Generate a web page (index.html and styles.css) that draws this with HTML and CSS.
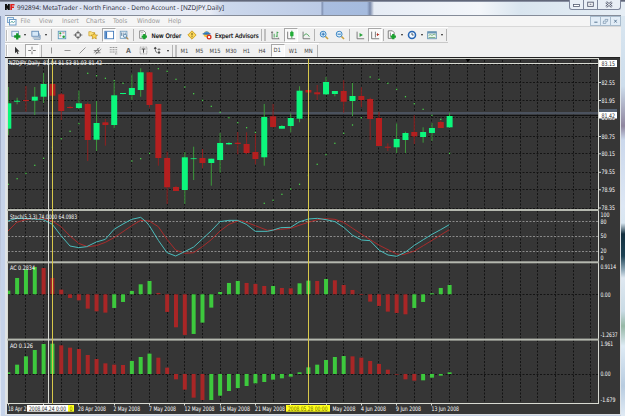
FILE: index.html
```html
<!DOCTYPE html>
<html lang="en">
<head>
<meta charset="utf-8">
<title>MetaTrader</title>
<link rel="stylesheet" href="styles.css">
</head>
<body>
<div class="window">
  <header class="title">
    <svg class="logo" width="10" height="8" viewBox="0 0 10 8"><path d="M0 1h1.8l1.2 2V1h1.8v6H3L1.8 5v2H0z" fill="#111"/><path d="M5.3 1h4.2v1.6H7v1h2v1.4H7v2H5.3z" fill="#e0201c"/></svg>
    <svg class="caption" width="240" height="14"><text x="2" y="10" textLength="207" lengthAdjust="spacingAndGlyphs">992894: MetaTrader - North Finance - Demo Account - [NZDJPY,Daily]</text></svg>
    <div class="winbtns">
      <svg width="13" height="9" viewBox="0 0 13 9"><rect x="3.5" y="4.5" width="6" height="2" fill="#fff" stroke="#555b70" stroke-width=".8"/></svg>
      <svg width="14" height="9" viewBox="0 0 14 9"><rect x="4" y="2" width="6" height="4.5" fill="#fff" stroke="#555b70"/><rect x="6" y="3.7" width="2" height="1" fill="#555b70"/></svg>
      <svg width="23" height="9" viewBox="0 0 23 9"><path d="M8.500 2l6 5M14.500 2l-6 5" stroke="#555b70" stroke-width="2.4"/><path d="M8.700 2.200l5.600 4.600M14.300 2.200l-5.600 4.600" stroke="#fff" stroke-width="1"/></svg>
    </div>
  </header>
  <div class="panel">
    <nav class="menu">
      <svg width="10" height="9" viewBox="0 0 10 9"><rect x=".5" y=".5" width="6" height="5" fill="#e4f1fb" stroke="#7fa6cc"/><rect x="2.500" y="2.500" width="6.500" height="5.500" fill="#fff" stroke="#6c9ac6"/><path d="M3.500 6l1.500-2 1.300 2 1.700-2" fill="none" stroke="#57a5a0" stroke-width=".8"/></svg>
      <span>File</span><span>View</span><span>Insert</span><span>Charts</span><span>Tools</span><span>Window</span><span>Help</span>
      <div class="mdi">
        <svg viewBox="0 0 11 10"><path d="M4 6.500h4" stroke="#51708c" stroke-width="1.200"/></svg>
        <svg viewBox="0 0 11 10"><path d="M3 5h3.500l-.7 3H2.500zM5 4V3h3.500l-.8 3" fill="none" stroke="#6f8ba4" stroke-width=".8"/></svg>
        <svg viewBox="0 0 11 10"><path d="M4 3.500l3 3.500M7 3.500L4 7" stroke="#51708c" stroke-width="1.100"/></svg>
      </div>
    </nav>
    <div class="bar main">
      <i class="grip"></i>
      <svg viewBox="0 0 12 12"><rect x="1" y="1.500" width="8" height="6" fill="#e6f1fb" stroke="#6c91b8"/><path d="M7.500 4v7.500M3.800 7.800h7.500" stroke="#16962a" stroke-width="2.800"/></svg>
      <b class="caret"></b>
      <svg viewBox="0 0 12 12"><rect x="1" y="1.500" width="8" height="6" fill="#d5e8f8" stroke="#5c86b2"/><path d="M2 9.500h8V4M3.500 11.200H11V6" fill="none" stroke="#7799b8"/></svg>
      <b class="caret"></b>
      <i class="sep"></i>
      <svg viewBox="0 0 12 12"><rect x="1.500" y="1.500" width="9" height="9" fill="#eef7f9" stroke="#5895b5"/><circle cx="4" cy="4" r="1.300" fill="#28a138"/><circle cx="8" cy="8" r="1.500" fill="#28a138"/><path d="M6.500 3.500h2.500M3 7h2" stroke="#c55"/></svg>
      <svg viewBox="0 0 12 12"><circle cx="6" cy="6" r="3.200" fill="none" stroke="#555"/><path d="M6 .8v4M6 7.200v4M.8 6h4M7.200 6h4" stroke="#555"/></svg>
      <svg viewBox="0 0 12 12"><path d="M1 2h3l1 1h3v4H1z" fill="#fbe27b" stroke="#c79a2a" stroke-width=".8"/><path d="M7.500 3.500l1.200 2.400 2.700.3-2 1.800.6 2.700-2.500-1.300L5 10.700l.6-2.700-2-1.800 2.700-.3z" fill="#fcd44e" stroke="#b88a1e" stroke-width=".8"/></svg>
      <svg class="on" viewBox="0 0 12 12"><rect x="1" y="1.500" width="10.500" height="9" fill="#fff" stroke="#3a74b8"/><rect x="1.500" y="2" width="2.200" height="8" fill="#3b77bd"/></svg>
      <svg viewBox="0 0 12 12"><rect x="1.500" y="1.500" width="8" height="8.500" fill="#eaf4fb" stroke="#6f9cbd"/><path d="M3 3v4M5 3v4M7.500 3v3" stroke="#6a86a0"/><circle cx="7.200" cy="7" r="2" fill="#d9ecf8" stroke="#5a83a6"/><path d="M8.700 8.500l2.500 2.800" stroke="#b5894a" stroke-width="1.300"/></svg>
      <i class="sep"></i>
      <svg viewBox="0 0 12 12"><path d="M2 1h5l2 2v7H2z" fill="#fff" stroke="#777"/><path d="M3.500 3h3M3.500 5h3" stroke="#999" stroke-width=".7"/><path d="M7.500 4.800v6.400M4.300 8h6.400" stroke="#18a12c" stroke-width="2.700"/></svg>
      <span class="lbl order">New Order</span>
      <svg viewBox="0 0 12 12"><path d="M6 1l5 5-5 5-5-5z" fill="#fbd95a" stroke="#c8961a"/><path d="M6 3.500v3M6 7.500v1.200" stroke="#6e5310" stroke-width="1.200"/></svg>
      <svg viewBox="0 0 12 12"><circle cx="5.500" cy="5" r="3.600" fill="#f5c63c"/><path d="M1.500 4.500Q5.500-1.500 10 4.500z" fill="#468fd0"/><ellipse cx="5.500" cy="4.600" rx="5" ry="1.100" fill="#2f72b8"/><circle cx="8.500" cy="8.500" r="3" fill="#d8321f"/><rect x="7.300" y="7.300" width="2.400" height="2.400" fill="#fff"/></svg>
      <span class="lbl ea">Expert Advisors</span>
      <i class="sep dbl"></i>
      <svg viewBox="0 0 12 12"><path d="M2.500 2v8.500H11M1.500 3.500l1-1.500 1 1.500M9.800 9.500l1.200 1" fill="none" stroke="#666"/><path d="M5 4.500v4.500M8.500 2v6.500M8.500 3H10M7 7.500h1.500" stroke="#2b9b3c"/></svg>
      <svg class="on" viewBox="0 0 12 12"><path d="M2 2v8.500H11" fill="none" stroke="#666"/><path d="M7 .8v9" stroke="#1d8a2c"/><rect x="5" y="2" width="4" height="5.500" rx="1" fill="#23ad38"/></svg>
      <svg viewBox="0 0 12 12"><path d="M2.500 2v8.500H11" fill="none" stroke="#666"/><path d="M3 7.500q3-6 7 .5" fill="none" stroke="#3b9d4c"/></svg>
      <i class="sep"></i>
      <svg viewBox="0 0 12 12"><path d="M7.500 7.500l3.300 3.300" stroke="#c9a03c" stroke-width="1.900"/><circle cx="5" cy="5" r="3.500" fill="#dff1fc" stroke="#3f88c5" stroke-width="1.200"/><path d="M5 3v4M3 5h4" stroke="#2f74b5" stroke-width="1.200"/></svg>
      <svg viewBox="0 0 12 12"><path d="M7.500 7.500l3.300 3.300" stroke="#c9a03c" stroke-width="1.900"/><circle cx="5" cy="5" r="3.500" fill="#dff1fc" stroke="#3f88c5" stroke-width="1.200"/><path d="M3 5h4" stroke="#2f74b5" stroke-width="1.200"/></svg>
      <i class="sep"></i>
      <svg viewBox="0 0 12 12"><path d="M2.500 2v8.500H11" fill="none" stroke="#666"/><path d="M5.500 3.500v5l4-2.500z" fill="#2ba33c"/></svg>
      <svg class="on" viewBox="0 0 12 12"><path d="M2 2v8.500H11M6.500 2v7" fill="none" stroke="#666"/><path d="M11 5.500H8M9 4v3" stroke="#b5382c" stroke-width="1.200"/></svg>
      <i class="sep"></i>
      <svg viewBox="0 0 12 12"><path d="M1.500 1h5l2 2v7h-7z" fill="#fff" stroke="#666"/><path d="M4 3v5" stroke="#777"/><path d="M7.500 4.800v6.400M4.300 8h6.400" stroke="#18a12c" stroke-width="2.700"/></svg>
      <b class="caret"></b>
      <svg viewBox="0 0 12 12"><circle cx="6" cy="6" r="4.200" fill="#f4faff" stroke="#2765b3" stroke-width="1.900"/><path d="M6 3.500V6h2" fill="none" stroke="#345"/></svg>
      <b class="caret"></b>
      <svg viewBox="0 0 12 12"><rect x=".8" y="2" width="10.400" height="8.500" fill="#e9f4ec" stroke="#5d8db0"/><path d="M1 3.300h10" stroke="#5d8db0" stroke-width="1.600"/><path d="M2 6.500l2-1 2 1 2.500-1.500 2 1M2 9h8" fill="none" stroke="#5ea06c" stroke-width=".9"/></svg>
      <b class="caret"></b>
      <i class="sep"></i>
    </div>
    <div class="bar draw">
      <i class="grip"></i>
      <svg viewBox="0 0 12 12"><path d="M4 1v8.500l2-1.800 1.500 3.300 1.300-.6-1.500-3.200h2.700z" fill="#333"/></svg>
      <svg class="on" viewBox="0 0 12 12"><path d="M6 1v3.800M6 7.200V11M1 6h3.800M7.200 6H11" stroke="#555"/></svg>
      <i class="sep"></i>
      <svg viewBox="0 0 12 12"><path d="M6 2v8" stroke="#777"/></svg>
      <svg viewBox="0 0 12 12"><path d="M2 6h8" stroke="#777"/></svg>
      <svg viewBox="0 0 12 12"><path d="M2 10l8-8" stroke="#777"/></svg>
      <svg viewBox="0 0 12 12"><path d="M1 9l8-7M3 11l8-7M3 6l2 4M6 3l2 5M1 6h7M4 9h6" stroke="#666" stroke-width=".9"/></svg>
      <svg viewBox="0 0 12 12"><path d="M1 2h10M1 5h10M1 8h10M8 10.500h3" stroke="#777" stroke-dasharray="1.500 .6"/></svg>
      <span class="tool">A</span>
      <svg viewBox="0 0 12 12"><rect x="1.500" y="1.500" width="9" height="9" fill="none" stroke="#888" stroke-dasharray="1.200 .8"/><path d="M3.500 4h5M6 4v5" stroke="#444" stroke-width="1.300"/></svg>
      <svg viewBox="0 0 12 12"><path d="M1 3l2-2 2 2-2 2zM6 8.500l2-2 2 2-2 2z" fill="#444"/><path d="M3 5l1 3 2 1M6 4.500h4M8 3v3" fill="none" stroke="#555"/></svg>
      <b class="caret"></b>
      <i class="sep dbl"></i>
      <span>M1</span><span>M5</span><span>M15</span><span>M30</span><span>H1</span><span>H4</span><span class="on">D1</span><span>W1</span><span>MN</span>
      <i class="sep"></i>
    </div>
    <svg id="chart" viewBox="5 57 616 358" width="616" height="358"></svg>
  </div>
</div>
<script src="chart.js"></script>
</body>
</html>
```
FILE: styles.css
```css
* { box-sizing: border-box; }
html, body { margin: 0; height: 100%; overflow: hidden; }
body { font-family: "DejaVu Sans Condensed", "DejaVu Sans", sans-serif; font-size: 6px; color: #222; }

.window {
  width: 625px;
  height: 416px;
  padding: 0 4px 0 5px;
  background:
    linear-gradient(#4d5265, #9ba3b5) 0 0 / 100% 2px no-repeat,
    linear-gradient(90deg, #ccd6ea 0, #e1e7f3 110px, #e8ecf5 210px, #ccd8ec 225px, #bccbe6 321px, #7d8dad 322px, #a9bddf 324px, #a5bbde 367px, #7888a9 370px, #e6ecf5 374px, #f3f6fa 480px, #d9e5ef 520px, #e6eef5 625px) 0 0 / 100% 16px no-repeat,
    linear-gradient(#8593b4, #e6edf8) 0 16px / 1px 400px no-repeat,
    linear-gradient(#d9e6f0 0, #cdddec 70px, #8f869f 110px, #cbd8ec 124px, #dde7f4 190px, #d8e6f1 207px, #14303f 218px, #1d4254 240px, #90a9b8 254px, #dfe8f1 262px, #c9dbe5 295px, #96b8a6 310px, #deebf5 330px, #b8cce0 370px, #e1ebf5 400px) 621px 16px / 4px 400px no-repeat,
    #c6d3e9;
}

.title { height: 15px; display: flex; align-items: flex-start; }
.logo { margin: 3px 0 0 0; }
.caption { flex: none; font: 6.500px "Open Sans", sans-serif; text-rendering: geometricPrecision; }
.caption text { fill: #1d2433; }
.winbtns { display: flex; margin-left: auto; margin-right: 0; height: 10px; background: #e9eef5; border: 1px solid #7e869b; border-top: 0; border-radius: 0 0 3px 3px; }
.winbtns svg + svg { border-left: 1px solid #7e869b; }
.winbtns svg { flex: none; display: block; }

.panel { width: 616px; background: #f0f0f0; border-top: 1px solid #858c99; display: flex; flex-direction: column; }

.menu { height: 11px; display: grid; grid-template-columns: 14.500px 18.500px 23px 24px 27px 24px 31px 20px 1fr; align-items: center; background: #f5f5f5; border-bottom: 1px solid #d8d8d8; font-size: 6.500px; color: #9a9a9a; padding-left: 1px; white-space: nowrap; }
.menu > svg { margin-left: 1px; }
.mdi { display: flex; justify-content: flex-end; }
.mdi svg { width: 10px; height: 10px; background: #e2edf7; border: 1px solid #a9bccd; border-left-width: 0; }
.mdi svg:first-child { width: 11px; border-left-width: 1px; }

.bar { display: grid; align-items: center; justify-items: center; border-top: 1px solid #fff; border-bottom: 1px solid #c8c8c8; width: max-content; white-space: nowrap; }
.bar svg { width: 10px; height: 10px; display: block; }
.bar .on { background: #f9f9f9; border: 1px solid #a8a8a8; border-right-color: #fff; border-bottom-color: #fff; width: 14px; height: 14px; padding: 1px; }
.main { height: 16px; grid-template-columns: 4px 13px 6px 15px 6px 5px 16px 15px 16px 15px 15px 5px 14px 34px 16px 14px 45px 8px 16px 15px 15px 3px 16px 15px 5px 15px 15px 3px 14px 5px 15px 6px 14px 6px 3px; }
.draw { height: 14px; border-bottom: 0; grid-template-columns: 4px 15px 15px 5px 15px 16px 15px 15px 16px 15px 15px 13px 7px 6px 15px 15px 16px 16px 15px 16px 15px 16px 15px 3px; font-size: 5.800px; color: #444; }
.draw svg { width: 9px; height: 9px; }
.draw .on { width: 14px; height: 13px; }
.draw span.on { line-height: 10px; padding: 0 2px; }
.lbl { justify-self: start; font-size: 6.200px; color: #000; -webkit-text-stroke: .15px #000; }
.order { margin-left: 1.500px; }
.ea { margin-left: 1px; }
.tool { font-weight: bold; font-size: 7px; color: #666; }
.caret { border: 1.800px solid transparent; border-top: 2px solid #222; border-bottom: 0; }
.sep { width: 1px; height: 12px; background: #b4b4b4; }
.dbl { width: 5px; background: none; border-left: 1px solid #b4b4b4; border-right: 2px solid #c0c0c0; }
.grip { width: 2px; height: 11px; border-left: 1px solid #bbb; border-right: 1px solid #fff; }

#chart { display: block; flex: none; font-family: "DejaVu Sans Condensed", "DejaVu Sans", sans-serif; font-size: 6.200px; }
#chart text { fill: #fff; }
#chart text.dark { fill: #222; }
#chart text.olive { fill: #6b6500; }
.bg { fill: #363636; }
.grid { stroke: #141414; stroke-width: 1; stroke-dasharray: 2 1.500; fill: none; }
.level { stroke: #a0a0a0; stroke-width: .8; stroke-dasharray: 2 1.500; }
.up { fill: #0cf77c; }
.down { fill: #b51f1f; }
.upwick { stroke: #3c9a3c; }
.downwick { stroke: #8f2020; }
.rise { fill: #3dc93d; }
.fall { fill: #a82626; }
.dot { fill: #4be04b; }
.k { fill: none; stroke: #4bbcbc; stroke-width: 1; }
.d { fill: none; stroke: #b52a2a; stroke-width: .9; }
.frame { fill: #d8dad2; }
.split { fill: #b5b8af; }
.yellow { fill: #d8c84a; }
```
FILE: chart.js
```js
const svg = document.getElementById('chart');
const parts = [];
const STEP = 8.826, X0 = 8.3;
const cx = k => X0 + STEP * k;
const rect = (x, y, w, h, cls, extra = '') =>
  parts.push(`<rect x="${x}" y="${y}" width="${w}" height="${h}" class="${cls}" ${extra}/>`);
const line = (x1, y1, x2, y2, cls) =>
  parts.push(`<line x1="${x1}" y1="${y1}" x2="${x2}" y2="${y2}" class="${cls}"/>`);
const text = (x, y, w, s, cls = '') =>
  parts.push(`<text x="${x}" y="${y}" textLength="${w}" lengthAdjust="spacingAndGlyphs" class="${cls}">${s}</text>`);

// Candles: wick top, body top, body bottom, wick bottom, direction
const candles = [
  [87,103.3,128.7,135,1],[97.7,100.7,101.7,104.3,1],[86,100,101,111.7,0],[87,96.7,100.7,115,1],[73,84,96.7,103,1],
  [84,84,95.7,97,0],[93,94.3,111,120,0],[105.7,107,108,108.7,0],[90.7,103.3,108,109.3,1],[102.5,104,140,161,0],
  [101,123,139.7,151,1],[119,122.3,125,145.7,0],[82.3,95.3,125,128.3,1],[93,93,94,94.3,1],[74.3,88,95,100,1],
  [68.3,72.3,90,96.7,1],[71.7,72.3,105,107.7,0],[104,104,158,165.7,0],[151.7,158,187.3,204,0],[185.7,187,191,191,0],
  [152,157.3,190,204,1],[146.7,158.3,159.1,180,1],[149,158,163,168.3,0],[158.7,158.7,163,185.7,1],[133,143,160,172.7,1],
  [142,143,144.3,145,1],[132,142.7,144,154.3,0],[132.3,144,153,154.3,0],[133.7,152,159,164.3,0],[104,117,157.3,165.7,1],
  [104,116.3,127,127.7,0],[125,126,128.7,128.7,1],[113.3,118,126,132.3,1],[86.3,90.7,118.7,122.3,1],[88,90,92.5,93,0],
  [85,92.3,94.3,100,0],[77,82,94.3,95,1],[91,91,94,96.3,1],[80.3,91,101.7,112.7,0],[83,96,101,116,1],
  [87.3,96,100,107.3,0],[97.7,99,119,140,0],[112,118,146,146,0],[143.3,146.7,147.7,151,0],[123.3,139,147.3,153,1],
  [131.7,133,140,153,1],[115.3,132,136.3,144,0],[127.3,132,137,142.7,1],[123,128,133,141,1],[120.3,122,128,128,0],
  [112.7,116,127.3,128,1]
];
const sar = [184.3,178.7,173.3,165.3,158.3,147.3,138.7,131.3,123.7,73.3,75.7,78.3,80.7,83.3,161,158.7,153.3,68.7,71.3,79.3,87,93.7,100.3,106.3,112.3,117.7,122.7,127.7,132.3,203.3,200.3,194.3,189,184.3,175.3,164.3,154.7,143.3,133.3,125,117.7,77,79.3,83.3,89.3,96.7,103.7,109.3,115.3,119.3,153.3];

// Histograms: height above zero in thirds of a pixel
const ac = [11,49,75,82,79,49,14,-11,-18,-43,-51,-55,-41,-23,10,30,40,4,-53,-99,-122,-119,-85,-40,7,34,40,34,31,25,25,19,18,33,41,40,46,42,28,13,-2,-22,-35,-52,-56,-60,-41,-23,3,19,28];
const ao = [5,28,53,72,90,91,86,79,75,57,45,32,28,27,39,51,61,49,19,-16,-47,-71,-78,-78,-65,-51,-42,-36,-28,-24,-17,-13,-8,5,20,28,42,51,54,53,49,39,30,13,-2,-16,-20,-19,-11,-5,5];

const main = [[24,48],[50,40],[77,40],[104,42],[130,44],[157,58],[183,92],[210,123],[236,128],[260,125],[289,111],[316,103],[342,73],[369,57],[395,43],[422,37],[438,50],[448,62],[475,106],[501,143],[527,153],[554,140],[581,126],[607,102],[634,77],[660,50],[687,46],[712,46],[739,58],[766,79],[802,79],[820,75],[842,68],[872,67],[897,51],[925,42],[952,40],[978,44],[1005,50],[1031,67],[1058,91],[1085,105],[1110,107],[1138,136],[1164,150],[1190,154],[1217,141],[1243,121],[1270,104],[1296,88],[1322,74],[1348,59]];
const signal = [[24,78],[50,52],[77,44],[104,40],[130,42],[157,48],[183,65],[210,93],[236,115],[262,125],[289,122],[316,112],[342,98],[369,80],[395,62],[422,46],[448,48],[475,65],[501,103],[527,135],[554,145],[581,143],[607,125],[634,104],[660,78],[687,58],[713,48],[725,47],[766,62],[802,76],[842,73],[872,70],[897,61],[925,52],[952,44],[978,41],[1005,43],[1031,52],[1058,70],[1085,88],[1110,104],[1138,121],[1164,134],[1190,147],[1210,149],[1243,138],[1270,122],[1296,106],[1322,90],[1348,74]];

rect(5, 57, 616, 358, 'edge', 'fill="#dfe3e6"');
rect(7, 57, 613, 357, 'bg');
rect(5, 57, 615, 1, '', 'fill="#222"');

// Grid
for (let k = 2; k <= 66; k += 2) {
  const x = Math.floor(cx(k)) + .5;
  line(x, 60, x, 403, 'grid');
}
[64.500,82.500,100.500,117.500,136.500,153.500,172.500,189.500,208.500,294.500,374.500].forEach(y => line(8, y, 598, y, 'grid'));
[221.500,236.500,251.500].forEach(y => line(8, y, 598, y, 'level'));

// Bid and ask lines
rect(8, 112, 591, 2.300, '', 'fill="#4b525e"');
rect(8, 115, 591, 1, '', 'fill="#111"');

candles.forEach(([wt, bt, bb, wb, up], k) => {
  const x = cx(k), left = Math.max(8, x - 3);
  line(x, wt, x, wb, up ? 'upwick' : 'downwick');
  rect(left, bt, x + 3 - left, bb - bt, up ? 'up' : 'down');
});
sar.forEach((y, k) => rect(cx(k) - .6, y - .6, 1.200, 1.200, 'dot'));

const histogram = (values, zero) => values.forEach((v, k) => {
  const rising = k === 0 || v >= values[k - 1];
  const x = cx(k), left = Math.max(8, x - 2), h = Math.abs(v) / 3;
  rect(left, v > 0 ? zero - h : zero, x + 2 - left, h, rising ? 'rise' : 'fall');
});
histogram(ac, 294.3);
histogram(ao, 374);

const poly = (pts, cls) =>
  parts.push(`<polyline class="${cls}" points="${pts.map(([x, y]) => `${x / 3},${205 + y / 3}`).join(' ')}"/>`);
poly(signal, 'd');
poly(main, 'k');

// Frames and pane dividers
rect(7, 58, 592, 1, 'frame');
rect(8, 63, 591, 1, 'frame');
rect(7, 58, 1, 346, 'frame');
rect(598, 58, 1, 346, 'frame');
rect(7, 403, 592, 1, 'frame');
rect(7, 209, 592, 2, 'split');
rect(7, 261.300, 592, 2, 'split');
rect(7, 338.600, 592, 2, 'split');
parts.push('<path d="M465.500 59h5l-2.500 3z" fill="#000"/>');

// Vertical markers
rect(48, 59, 1, 345, 'frame');
rect(52, 59, 1, 345, 'yellow');
rect(308, 59, 1, 345, 'yellow');

// Pane captions
text(9, 65.200, 93, 'NZDJPY,Daily&#160; 81.04 81.53 81.03 81.42');
text(10, 219, 67, 'Stoch(5,3,3) 74.0000 64.0983');
text(10, 270.300, 25, 'AC 0.2834');
text(10, 347.600, 23, 'AO 0.126');

// Price scale
[[84.500,'82.55'],[102.500,'81.95'],[138.500,'80.75'],[155.800,'80.15'],[174.300,'79.55'],[191.800,'78.95'],[210,'78.35']].forEach(([y, s]) => {
  text(601.500, y, 13.500, s);
  rect(599, y - 2.500, 2, 1, 'frame');
});
rect(599, 109, 18, 3, '', 'fill="#566273"');
text(601.500, 120, 13.500, '81.35');
rect(599, 60, 18, 7, '', 'fill="#fff"');
text(601.500, 65.700, 13.500, '83.15', 'dark');
rect(599, 112, 18, 6.500, '', 'fill="#fff"');
text(601.500, 117.500, 13.500, '81.42', 'dark');
[[216.800,9,'100'],[223.500,6,'80'],[238.300,6,'50'],[253,6,'20'],[260.300,3,'0'],[269,15.500,'0.9114'],[296.500,10,'0.00'],[337.300,17,'-1.2637'],[346,12.500,'1.961'],[376.300,10,'0.00'],[402.200,15,'-1.679']].forEach(([y, w, s]) => text(600.500, y, w, s));

// Time scale
[[8,18.500,'18 Apr 2'],[78,28,'28 Apr 2008'],[113.500,26.500,'2 May 2008'],[149,27,'7 May 2008'],[184.500,30,'12 May 2008'],[219.500,30.500,'16 May 2008'],[255,30,'21 May 2008'],[332.500,23,'May 2008'],[361,25,'4 Jun 2008'],[396,25,'9 Jun 2008'],[431.500,27.500,'13 Jun 2008']].forEach(([x, w, s]) => text(x, 410.800, w, s));
for (let k = 0; k <= 48; k += 4) rect(Math.floor(cx(k)), 404, 1, 1.500, 'frame');
rect(27, 405, 41, 6.700, '', 'fill="#fff"');
rect(68, 405, 6, 6.700, '', 'fill="#ffff1a"');
text(29, 410.600, 37, '2008.04.24 0:00', 'dark');
text(69.500, 410.600, 3, '0', 'olive');
rect(286, 405, 44, 6.700, '', 'fill="#ffff1a"');
text(288, 410.600, 39.500, '2008.05.28 00:00', 'olive');

svg.innerHTML = parts.join('');
```
